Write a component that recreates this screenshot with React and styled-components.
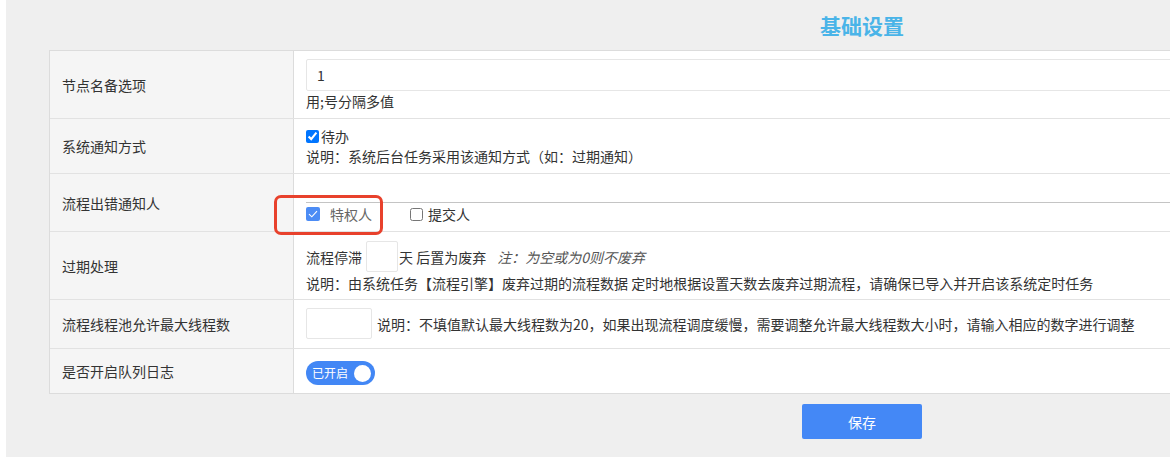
import styled, { createGlobalStyle } from "styled-components";

const GlobalStyle = createGlobalStyle`
  html, body {
    margin: 0;
    padding: 0;
    background: #fff;
    overflow: hidden;
  }
  body {
    font-family: "Noto Sans CJK SC", "Microsoft YaHei", sans-serif;
    font-size: 14px;
    color: #333;
  }
`;

const Page = styled.div`
  margin-left: 6px;
  width: 1712px;
  height: 457px;
  background: #efefef;
`;

const Title = styled.h2`
  margin: 0;
  height: 50px;
  line-height: 50px;
  text-align: center;
  font-size: 21px;
  font-weight: bold;
  color: #4ab4e8;
`;

const Table = styled.div`
  margin: 0 43px;
  border: 1px solid #dcdcdc;
  background: #fff;
`;

const Row = styled.div`
  display: grid;
  grid-template-columns: 244px 1fr;
  & + & {
    border-top: 1px solid #e2e2e2;
  }
`;

const Label = styled.div`
  display: flex;
  align-items: center;
  padding: 0 12px;
  background: #f5f5f5;
  border-right: 1px solid #dcdcdc;
  line-height: 20px;
`;

const Cell = styled.div`
  position: relative;
  min-height: ${(p) => p.h}px;
  box-sizing: border-box;
  padding: ${(p) => p.pt || 0}px 12px 0 12px;
  line-height: 20px;
`;

const TextInput = styled.input`
  box-sizing: border-box;
  display: block;
  width: ${(p) => p.w || "100%"};
  height: ${(p) => p.ht || 32}px;
  margin: 0;
  padding: 0 10px;
  border: 1px solid #e6e6e6;
  border-radius: 2px;
  background: #fff;
  font: inherit;
  color: #333;
  outline: none;
`;

const Hint = styled.div`
  line-height: ${(p) => p.lh || 21}px;
`;

const Inline = styled.div`
  display: flex;
  align-items: center;
  height: ${(p) => p.h || 20}px;
  white-space: nowrap;
`;

const NativeCheck = styled.input`
  width: 13px;
  height: 13px;
  margin: 0 ${(p) => p.gap || 2}px 0 0;
`;

const Option = styled.label`
  display: inline-flex;
  align-items: center;
  margin-right: ${(p) => p.mr || 0}px;
  color: ${(p) => (p.muted ? "#666" : "#333")};
`;

const BlueBox = styled.span`
  display: inline-flex;
  align-items: center;
  justify-content: center;
  width: 14px;
  height: 14px;
  border-radius: 2px;
  background: #4c8cf5;
  margin-right: 10px;
`;

const Divider = styled.div`
  height: 28px;
  margin: 0 -12px 0 0;
  border-bottom: 1px solid #c4c4c4;
`;

const Marker = styled.div`
  position: absolute;
  left: -20px;
  top: 21px;
  width: 109px;
  height: 40px;
  box-sizing: border-box;
  border: 3px solid #e8412c;
  border-radius: 7px;
  z-index: 2;
  pointer-events: none;
`;

const Note = styled.span`
  margin-left: 11px;
  font-style: italic;
  color: #555;
`;

const Switch = styled.div`
  display: inline-flex;
  align-items: center;
  justify-content: space-between;
  box-sizing: border-box;
  width: 69px;
  height: 24px;
  padding: 0 4px 0 6px;
  border-radius: 12px;
  background: #4287f5;
  color: #fff;
  font-size: 12px;
`;

const Knob = styled.span`
  width: 17px;
  height: 17px;
  border-radius: 50%;
  background: #fff;
`;

const Footer = styled.div`
  display: flex;
  justify-content: center;
  padding-top: 10px;
`;

const SaveButton = styled.button`
  width: 120px;
  height: 35px;
  border: none;
  border-radius: 2px;
  background: #4488f6;
  color: #fff;
  font: inherit;
  font-size: 14px;
  cursor: pointer;
`;

const Tick = () => (
  <svg width="10" height="8" viewBox="0 0 10 8">
    <path d="M1 4.2 L3.8 6.8 L9 1.2" fill="none" stroke="#fff" strokeWidth="1.1" />
  </svg>
);

export default function App() {
  return (
    <>
      <GlobalStyle />
      <Page>
        <Title>基础设置</Title>
        <Table>
          <Row>
            <Label>节点名备选项</Label>
            <Cell h={67} pt={8}>
              <TextInput defaultValue="1" />
              <Hint>用;号分隔多值</Hint>
            </Cell>
          </Row>
          <Row>
            <Label>系统通知方式</Label>
            <Cell h={54} pt={7}>
              <Inline>
                <NativeCheck type="checkbox" defaultChecked />
                待办
              </Inline>
              <Hint lh={20}>说明：系统后台任务采用该通知方式（如：过期通知）</Hint>
            </Cell>
          </Row>
          <Row>
            <Label>流程出错通知人</Label>
            <Cell h={57}>
              <Divider />
              <Inline h={22}>
                <Option mr={38} muted>
                  <BlueBox>
                    <Tick />
                  </BlueBox>
                  特权人
                </Option>
                <Option>
                  <NativeCheck type="checkbox" gap={5} />
                  提交人
                </Option>
              </Inline>
              <Marker />
            </Cell>
          </Row>
          <Row>
            <Label>过期处理</Label>
            <Cell h={67} pt={9}>
              <Inline h={31}>
                流程停滞
                <TextInput w="32px" ht={31} style={{ marginLeft: 4, marginRight: 1 }} />
                天 后置为废弃
                <Note>注：为空或为0则不废弃</Note>
              </Inline>
              <Hint lh={23}>
                说明：由系统任务【流程引擎】废弃过期的流程数据 定时地根据设置天数去废弃过期流程，请确保已导入并开启该系统定时任务
              </Hint>
            </Cell>
          </Row>
          <Row>
            <Label>流程线程池允许最大线程数</Label>
            <Cell h={48} pt={8}>
              <Inline h={31}>
                <TextInput w="66px" ht={31} style={{ marginRight: 5 }} />
                说明：不填值默认最大线程数为20，如果出现流程调度缓慢，需要调整允许最大线程数大小时，请输入相应的数字进行调整
              </Inline>
            </Cell>
          </Row>
          <Row>
            <Label>是否开启队列日志</Label>
            <Cell h={44} pt={12}>
              <Switch>
                已开启
                <Knob />
              </Switch>
            </Cell>
          </Row>
        </Table>
        <Footer>
          <SaveButton>保存</SaveButton>
        </Footer>
      </Page>
    </>
  );
}
